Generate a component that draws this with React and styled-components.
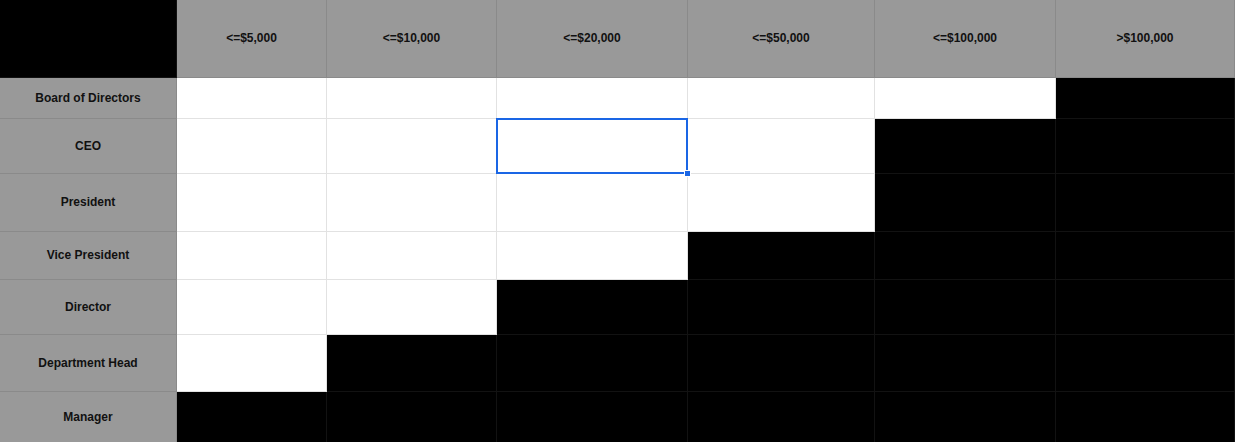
import React from 'react';
import styled, { createGlobalStyle } from 'styled-components';

const GlobalStyle = createGlobalStyle`
    html, body {
        margin: 0;
        padding: 0;
        background: #000;
    }
    * {
        box-sizing: border-box;
    }
`;

const columns = ['<=$5,000', '<=$10,000', '<=$20,000', '<=$50,000', '<=$100,000', '>$100,000'];
const colWidths = [177, 150, 170, 191, 187, 181, 179];

const roles = [
    { name: 'Board of Directors', blackFrom: 6, height: 41 },
    { name: 'CEO', blackFrom: 5, height: 55 },
    { name: 'President', blackFrom: 5, height: 58 },
    { name: 'Vice President', blackFrom: 4, height: 48 },
    { name: 'Director', blackFrom: 3, height: 55 },
    { name: 'Department Head', blackFrom: 2, height: 57 },
    { name: 'Manager', blackFrom: 1, height: 51 },
];

const App = () => {
    return (
        <>
            <GlobalStyle />
            <Sheet>
                <Row $height={78}>
                    <Cell $kind="black" />
                    {columns.map((c) => (
                        <Cell key={c} $kind="header">{c}</Cell>
                    ))}
                </Row>
                {roles.map((r) => {
                    return (
                        <Row key={r.name} $height={r.height}>
                            <Cell $kind="header">{r.name}</Cell>
                            {columns.map((c, i) => {
                                const selected = r.name === 'CEO' && i === 2;
                                return (
                                    <Cell
                                        key={c}
                                        $kind={i + 1 >= r.blackFrom ? 'black' : 'white'}
                                        $selected={selected}
                                    >
                                        {selected && (
                                            <Selection>
                                                <Handle />
                                            </Selection>
                                        )}
                                    </Cell>
                                );
                            })}
                        </Row>
                    );
                })}
            </Sheet>
        </>
    );
};

const kinds = {
    header: { bg: '#999999', line: '#8a8a8a' },
    white: { bg: '#ffffff', line: '#e2e2e2' },
    black: { bg: '#000000', line: '#121212' },
};

const Sheet = styled.div`
    width: 1235px;
    height: 442px;
    overflow: hidden;
    display: flex;
    flex-direction: column;
    font-family: "Liberation Sans", Arial, sans-serif;
`;

const Row = styled.div`
    display: grid;
    grid-template-columns: ${colWidths.map((w) => `${w}px`).join(' ')};
    height: ${(p) => p.$height}px;
    flex-shrink: 0;
`;

const Cell = styled.div`
    position: relative;
    z-index: ${(p) => (p.$selected ? 2 : 'auto')};
    display: flex;
    align-items: center;
    justify-content: center;
    padding-bottom: 1px;
    background: ${(p) => kinds[p.$kind].bg};
    border-right: 1px solid ${(p) => kinds[p.$kind].line};
    border-bottom: 1px solid ${(p) => kinds[p.$kind].line};
    color: #111;
    font-size: 12px;
    font-weight: bold;
    white-space: nowrap;
`;

const Selection = styled.div`
    position: absolute;
    left: -1px;
    top: -1px;
    right: -1px;
    bottom: -1px;
    border: 2px solid #1a66e5;
`;

const Handle = styled.div`
    position: absolute;
    right: -5px;
    bottom: -5px;
    width: 7px;
    height: 7px;
    background: #1a66e5;
    border: 1px solid #fff;
`;

export default App;
